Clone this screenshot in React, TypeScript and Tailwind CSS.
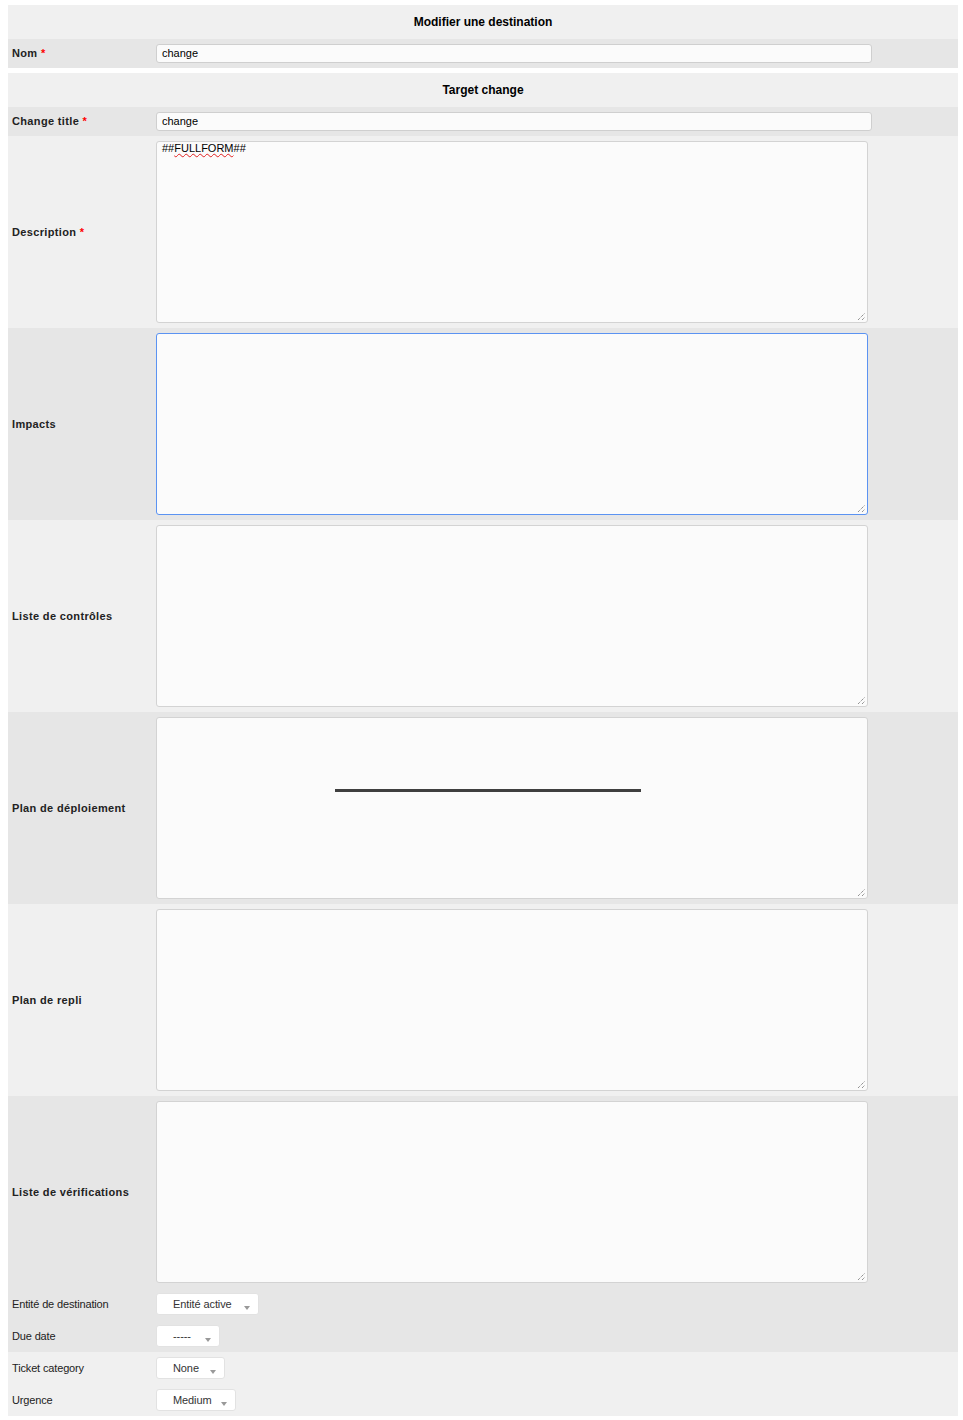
import React from "react";

const font = { fontFamily: '"Liberation Sans", Arial, sans-serif' };

function Grip() {
  return (
    <svg className="absolute right-[1px] bottom-[1px]" width="9" height="9" viewBox="0 0 9 9">
      <line x1="1" y1="8" x2="8" y2="1" stroke="#666" strokeWidth="1" strokeDasharray="1 1" />
      <line x1="5" y1="8" x2="8" y2="5" stroke="#666" strokeWidth="1" strokeDasharray="1 1" />
    </svg>
  );
}

function Area({ focused, children }: { focused?: boolean; children?: React.ReactNode }) {
  return (
    <div
      className={
        "relative w-[712px] h-[182px] rounded-[3px] bg-[#fbfbfb] border " +
        (focused ? "border-[#5b93f2]" : "border-[#d3d3d3]")
      }
    >
      {children}
      <Grip />
    </div>
  );
}

function Label({ text, req }: { text: string; req?: boolean }) {
  return (
    <div className="w-[148px] pl-1 text-[11px] font-bold text-[#222] tracking-[0.35px]">
      {text}
      {req && <span className="text-[#ff0000]"> *</span>}
    </div>
  );
}

function Input({ value }: { value: string }) {
  return (
    <div className="w-[716px] h-[19px] rounded-[3px] border border-[#cfcfcf] bg-[#fbfbfb] pl-[5px] text-[11px] text-black leading-[17px]">
      {value}
    </div>
  );
}

function Select({ value, w }: { value: string; w: string }) {
  return (
    <div
      className={
        "h-[22px] rounded-[3px] border border-[#e2e2e2] bg-white flex items-center pl-[16px] text-[11px] text-[#333] tracking-[-0.1px] relative " +
        w
      }
    >
      {value}
      <svg className="absolute right-[8px] top-[12px]" width="6" height="4" viewBox="0 0 6 4">
        <path d="M0 0 L6 0 L3 4 Z" fill="#999" />
      </svg>
    </div>
  );
}

function AreaRow({ label, bg, req, focused, children }: { label: string; bg: string; req?: boolean; focused?: boolean; children?: React.ReactNode }) {
  return (
    <div className={"flex items-center h-[192px] " + bg}>
      <Label text={label} req={req} />
      <Area focused={focused}>{children}</Area>
    </div>
  );
}

function SmallRow({ label, bg, children }: { label: string; bg: string; children: React.ReactNode }) {
  return (
    <div className={"flex items-center h-[32px] " + bg}>
      <div className="w-[148px] pl-1 text-[11px] text-[#222] tracking-[-0.15px]">{label}</div>
      {children}
    </div>
  );
}

export default function App() {
  const A = "bg-[#f0f0f0]";
  const B = "bg-[#e6e6e6]";
  return (
    <div className="bg-white min-h-[1420px] pl-2 pr-[5px] pt-[5px]" style={font}>
      <div>
        <div className={"h-[34px] flex items-center justify-center text-[12px] font-bold text-black " + A}>
          Modifier une destination
        </div>
        <div className={"h-[29px] flex items-center " + B}>
          <Label text="Nom" req />
          <Input value="change" />
        </div>
      </div>
      <div className="mt-[5px]">
        <div className={"h-[34px] flex items-center justify-center text-[12px] font-bold text-black " + A}>
          Target change
        </div>
        <div className={"h-[29px] flex items-center " + B}>
          <Label text="Change title" req />
          <Input value="change" />
        </div>
        <AreaRow label="Description" bg={A} req>
          <div className="pl-[5px] text-[11px] leading-[12px] text-black">
            ##<span className="underline decoration-wavy decoration-[#e02020] decoration-1 underline-offset-1">FULLFORM</span>##
          </div>
        </AreaRow>
        <AreaRow label="Impacts" bg={B} focused />
        <AreaRow label="Liste de contrôles" bg={A} />
        <AreaRow label="Plan de déploiement" bg={B}>
          <div className="absolute left-[178px] top-[71px] w-[306px] h-[3px] bg-[#3f3f3f]" />
        </AreaRow>
        <AreaRow label="Plan de repli" bg={A} />
        <AreaRow label="Liste de vérifications" bg={B} />
        <SmallRow label="Entité de destination" bg={B}>
          <Select value="Entité active" w="w-[103px]" />
        </SmallRow>
        <SmallRow label="Due date" bg={B}>
          <Select value="-----" w="w-[64px]" />
        </SmallRow>
        <SmallRow label="Ticket category" bg={A}>
          <Select value="None" w="w-[69px]" />
        </SmallRow>
        <SmallRow label="Urgence" bg={A}>
          <Select value="Medium" w="w-[80px]" />
        </SmallRow>
      </div>
    </div>
  );
}
